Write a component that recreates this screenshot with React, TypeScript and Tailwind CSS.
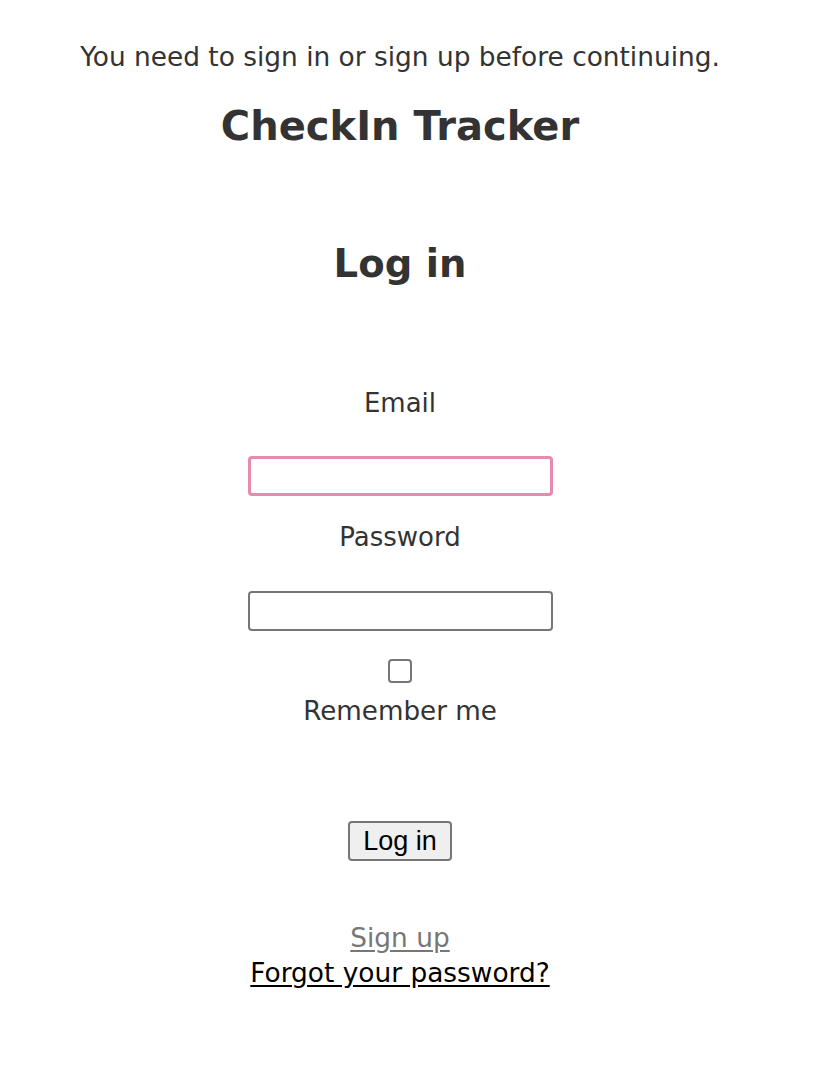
export default function App() {
  return (
    <div
      className="w-[800px] min-h-[1070px] bg-white text-[#333333] flex flex-col items-center pt-[42px]"
      style={{ fontFamily: '"DejaVu Sans", Verdana, sans-serif' }}
    >
      {/* FLASH */}
      <p className="text-[26.4px] leading-[30px]">You need to sign in or sign up before continuing.</p>

      {/* BRAND */}
      <h1 className="mt-[31px] text-[40px] leading-[46px] font-bold">CheckIn Tracker</h1>

      <h2 className="mt-[93px] text-[38.6px] leading-[44px] font-bold">Log in</h2>

      {/* FORM */}
      <form className="mt-[102px] flex flex-col items-center">
        <label className="text-[26px] leading-[30px]">Email</label>
        <input
          type="email"
          className="mt-[38px] w-[305px] h-[40px] rounded-[4px] border-[3px] border-[#e68ab0] outline-none bg-white"
        />

        <label className="mt-[26px] text-[26px] leading-[30px]">Password</label>
        <input
          type="password"
          className="mt-[39px] w-[305px] h-[40px] rounded-[4px] border-2 border-[#767676] outline-none bg-white"
        />

        <input
          type="checkbox"
          className="mt-[28px] w-[24px] h-[24px] appearance-none rounded-[4px] border-2 border-[#767676] bg-white"
        />
        <label className="mt-[13px] text-[26.2px] leading-[30px]">Remember me</label>

        <button
          type="button"
          className="mt-[95px] h-[40px] px-[13px] rounded-[4px] border-2 border-[#767676] bg-[#efefef] text-black text-[27px] leading-[30px]"
          style={{ fontFamily: '"Liberation Sans", Arial, sans-serif' }}
        >
          Log in
        </button>
      </form>

      {/* LINKS */}
      <div className="mt-[59px] flex flex-col items-center text-[26.4px] leading-[35px]">
        <a href="#" className="text-[#777777] underline underline-offset-[3px]">Sign up</a>
        <a href="#" className="text-black underline underline-offset-[3px]">Forgot your password?</a>
      </div>
    </div>
  );
}
